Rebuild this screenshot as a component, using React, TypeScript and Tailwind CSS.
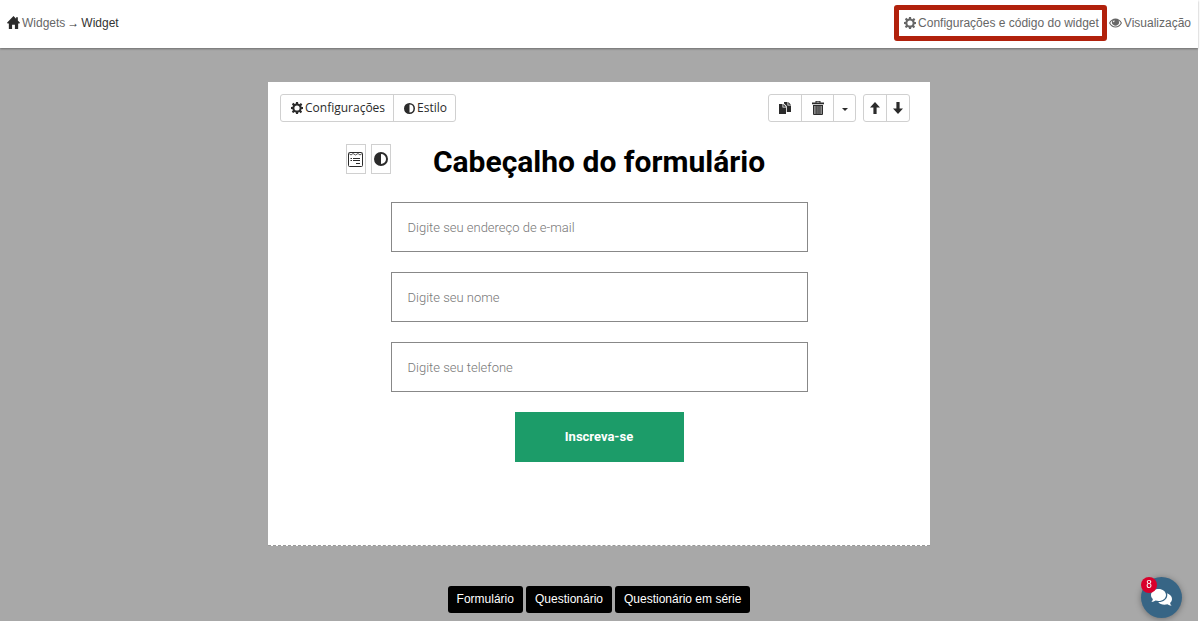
import type { ReactNode } from "react";

type IconProps = { className?: string };

function Svg({ className = "", box = "0 0 12 12", children }: IconProps & { box?: string; children: ReactNode }) {
  return (
    <svg viewBox={box} className={"shrink-0 " + className} fill="currentColor" aria-hidden="true">
      {children}
    </svg>
  );
}

const HomeIcon = ({ className }: IconProps) => (
  <Svg className={className}>
    <path d="M6 0 0 6.2l.6.8h1.1v5h3V8h2.600v4h3V7h1.100l.6-.8-2-2.100V1.200H8.400v1.300z" />
  </Svg>
);

const CogIcon = ({ className }: IconProps) => (
  <Svg className={className} box="-6 -6 12 12">
    <path
      fillRule="evenodd"
      d="M-1-6h2l.3 1.700 1.100.5 1.500-1.100 1.400 1.400-1.100 1.500.4 1L6-1v2l-1.600.3-.4 1 1.100 1.500-1.400 1.400L2.300 4.100l-1 .4L1 6h-2l-.3-1.600-1-.4-1.500 1.100-1.400-1.400 1.100-1.500-.4-1L-6 1v-2l1.600-.3.4-1-1.100-1.500 1.400-1.400 1.500 1.100 1-.4zM0-2.600A2.600 2.600 0 1 0 0 2.600 2.600 2.600 0 1 0 0-2.600z"
    />
  </Svg>
);

const EyeIcon = ({ className }: IconProps) => (
  <Svg className={className} box="0 0 13 10">
    <path
      fillRule="evenodd"
      d="M0 5C1.500 2 3.900.5 6.500.5S11.500 2 13 5c-1.500 3-3.900 4.500-6.500 4.500S1.500 8 0 5zm1.200 0c1.200 2.300 3.100 3.500 5.300 3.500s4.100-1.200 5.300-3.500C11.200 3.800 10.400 2.900 9.500 2.400A3.500 3.500 0 1 1 3.500 2.400C2.600 2.900 1.800 3.800 1.200 5zM5 2.200c-.8.5-1 1.300-.9 2l1-.1c0-.6.2-.9.700-1.200z"
    />
  </Svg>
);

const ContrastIcon = ({ className }: IconProps) => (
  <Svg className={className}>
    <path fillRule="evenodd" d="M6 0a6 6 0 1 0 0 12A6 6 0 0 0 6 0zm0 1.700a4.300 4.300 0 0 1 0 8.600z" />
  </Svg>
);

const CopyIcon = ({ className }: IconProps) => (
  <Svg className={className} box="0 0 13 12">
    <path d="M0 2h3.500v3.500H7V12H0zM4.300 2 7 4.700H4.300z" />
    <path d="M5 0h3.500v3.500H12V10H7.800V4.300L5 1.500zM9.300 0 12 2.700H9.300z" />
  </Svg>
);

const TrashIcon = ({ className }: IconProps) => (
  <Svg className={className} box="0 0 12 14">
    <path d="M3.500 0h5v1.500H12V3.200H0V1.500h3.500zm1 .8v.7h3V.8z" fillRule="evenodd" />
    <path d="M1 4h10v9.200l-.8.8H1.800L1 13.200z" opacity=".55" />
    <path d="M1 4h10v1H1zM1 13h10l-.8 1H1.800zM1 4h1v9H1zM3.700 4h.9v9h-.9zM5.600 4h.9v9h-.9zM7.500 4h.9v9h-.9zM10 4h1v9h-1z" />
  </Svg>
);

const ArrowUpIcon = ({ className }: IconProps) => (
  <Svg className={className} box="0 0 10 12">
    <path d="m5 0 5 5.500H6.600V12H3.400V5.500H0z" />
  </Svg>
);

const ArrowDownIcon = ({ className }: IconProps) => (
  <Svg className={className} box="0 0 10 12">
    <path d="m5 12 5-5.500H6.600V0H3.400v6.500H0z" />
  </Svg>
);

const CaretIcon = ({ className }: IconProps) => (
  <Svg className={className} box="0 0 6 3">
    <path d="M0 0h6L3 3z" />
  </Svg>
);

const FormIcon = ({ className }: IconProps) => (
  <Svg className={className} box="0 0 15 15">
    <g fill="none" stroke="currentColor">
      <rect x=".5" y=".5" width="14" height="14" rx="1" />
      <path d="M1 1.500 3 3l2-1.500L7.500 3 10 1.500 12 3l2-1.500" strokeWidth=".8" />
      <path d="M2.500 6.500h1.500M5 6.500h7M2.500 8.500h1.500M5 8.500h7" />
      <path d="M8 11.500h4" />
    </g>
  </Svg>
);

const ChatIcon = ({ className }: IconProps) => (
  <Svg className={className} box="0 0 21 18">
    <path d="M7.500 0C11.700 0 15 2.600 15 6s-3.300 6-7.500 6c-1 0-2-.2-2.900-.5C3.500 12.400 2 12.900.4 13c.9-.9 1.400-1.800 1.500-2.900C.7 9 0 7.600 0 6c0-3.400 3.300-6 7.500-6z" />
    <path d="M16 4.300c2.900.9 5 3 5 5.600 0 1.500-.7 2.900-1.900 4 .1 1.100.6 2 1.500 2.900-1.600-.1-3-.6-4.200-1.500-.9.3-1.900.5-2.900.5-2.700 0-5-1.100-6.300-2.800C12.300 13.200 16.300 10.400 16.300 6c0-.6-.1-1.200-.3-1.700z" />
  </Svg>
);

const groupClass = "flex h-7 divide-x divide-[#d0d0d0] overflow-hidden rounded-[3px] border border-[#d0d0d0] bg-white text-[#2b2b2b]";

const fields = [
  { id: "email", type: "email", label: "Digite seu endereço de e-mail" },
  { id: "name", type: "text", label: "Digite seu nome" },
  { id: "phone", type: "tel", label: "Digite seu telefone" },
];

const blocks = ["Formulário", "Questionário", "Questionário em série"];

export default function App() {
  return (
    <div className="min-h-screen bg-white pr-[2px] font-['Liberation_Sans',sans-serif] text-xs text-[#333]">
      <div className="flex min-h-screen flex-col bg-[#a8a8a8]">
        <header className="flex h-12 items-center justify-between bg-white px-[7px] pb-[3px] shadow-[0_1px_2px_rgba(0,0,0,0.35)]">
          <nav className="flex items-center gap-[2px]" aria-label="Breadcrumb">
            <a href="#widgets" className="flex items-center gap-[2px] text-[#666]">
              <HomeIcon className="size-[13px] text-[#2b2b2b]" />
              Widgets
            </a>
            <span>→</span>
            <span>Widget</span>
          </nav>
          <div className="flex items-center gap-[2px] text-[#666]">
            <a
              href="#settings"
              className="flex h-9 items-center gap-[2px] rounded-[3px] border-[5px] border-[#b1210c] pr-[3px] pl-[5px]"
            >
              <CogIcon className="size-3" />
              Configurações e código do widget
            </a>
            <a href="#preview" className="flex items-center gap-[2px]">
              <EyeIcon className="h-[10px] w-[13px]" />
              Visualização
            </a>
          </div>
        </header>

        <main className="flex grow flex-col items-center px-4 pt-[34px]">
          <section className="w-full max-w-[662px] border-b border-dashed border-[#999] bg-white pb-[83px]">
            <div className="flex justify-between pt-3 pr-5 pl-3">
              <div className={groupClass + " font-['Open_Sans',sans-serif]"}>
                <button type="button" className="flex items-center gap-[2px] pr-2 pl-[10px]">
                  <CogIcon className="size-3" />
                  Configurações
                </button>
                <button type="button" className="flex items-center gap-[2px] pr-2 pl-[10px]">
                  <ContrastIcon className="size-[11px]" />
                  Estilo
                </button>
              </div>
              <div className="flex gap-[7px]">
                <div className={groupClass}>
                  <button type="button" aria-label="Duplicar" className="grid w-[33px] place-items-center">
                    <CopyIcon className="h-3 w-[13px]" />
                  </button>
                  <button type="button" aria-label="Excluir" className="grid w-8 place-items-center">
                    <TrashIcon className="h-[14px] w-[12px]" />
                  </button>
                  <button type="button" aria-label="Mais opções" className="grid w-[21px] place-items-center">
                    <CaretIcon className="mt-[2px] h-[3px] w-[6px]" />
                  </button>
                </div>
                <div className={groupClass}>
                  <button type="button" aria-label="Mover para cima" className="grid w-[23px] place-items-center">
                    <ArrowUpIcon className="h-3 w-[10px]" />
                  </button>
                  <button type="button" aria-label="Mover para baixo" className="grid w-[22px] place-items-center">
                    <ArrowDownIcon className="h-3 w-[10px]" />
                  </button>
                </div>
              </div>
            </div>

            <form
              className="mx-auto mt-5 flex max-w-[417px] flex-col gap-5 font-['Roboto',sans-serif]"
              onSubmit={(e) => e.preventDefault()}
            >
              <div className="relative flex h-10 items-center justify-center">
                <div className="absolute top-[2px] right-full flex gap-[5px] text-[#2b2b2b]">
                  <button
                    type="button"
                    aria-label="Campos"
                    className="grid h-[30px] w-5 place-items-center border border-[#d0d0d0] bg-white"
                  >
                    <FormIcon className="size-[15px]" />
                  </button>
                  <button
                    type="button"
                    aria-label="Estilo do formulário"
                    className="grid h-[30px] w-5 place-items-center border border-[#d0d0d0] bg-white"
                  >
                    <ContrastIcon className="size-[14px]" />
                  </button>
                </div>
                <h1 className="text-[30px] leading-10 font-bold whitespace-nowrap text-black">Cabeçalho do formulário</h1>
              </div>
              {fields.map((f) => (
                <input
                  key={f.id}
                  id={f.id}
                  type={f.type}
                  aria-label={f.label}
                  placeholder={f.label}
                  className="h-[50px] w-full border border-[#888] bg-white px-4 text-[13px] font-light text-[#333] outline-none placeholder:text-[#777]"
                />
              ))}
              <button type="submit" className="h-[50px] w-[169px] self-center bg-[#1c9c69] text-[13px] font-bold text-white">
                Inscreva-se
              </button>
            </form>
          </section>

          <div className="mt-10 flex gap-[3px] pb-2">
            {blocks.map((b) => (
              <button key={b} type="button" className="h-[27px] rounded-[3px] bg-black px-[9px] pb-px text-white">
                {b}
              </button>
            ))}
          </div>
        </main>
      </div>

      <button
        type="button"
        aria-label="Chat"
        className="fixed right-[18px] bottom-[3px] grid size-[41px] place-items-center rounded-full bg-[#376585] text-white shadow-[0_1px_6px_rgba(0,0,0,0.35)]"
      >
        <ChatIcon className="h-[18px] w-[21px]" />
        <span className="absolute top-0 left-0 grid size-4 place-items-center rounded-full bg-[#d8002b] text-[10px] leading-4">
          8
        </span>
      </button>
    </div>
  );
}
